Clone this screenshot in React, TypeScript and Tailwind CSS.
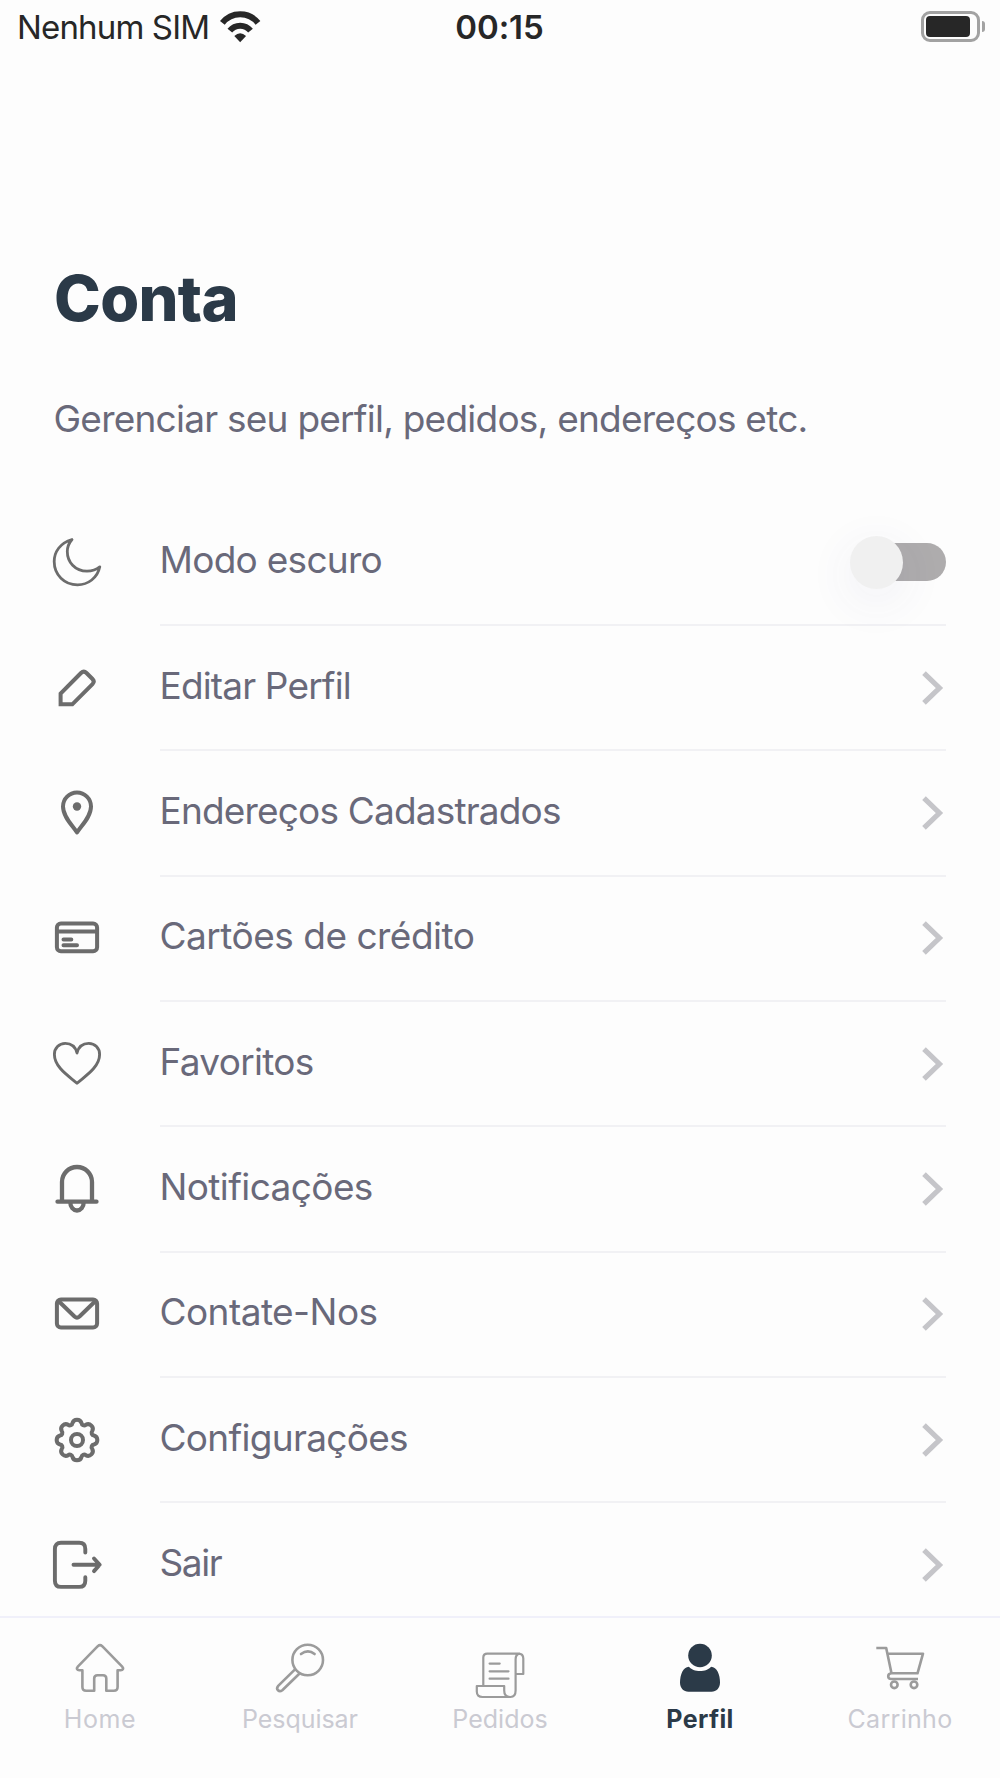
import React from "react";

type IconProps = { children: React.ReactNode; width?: number; className?: string };

function Icon({ children, width = 4, className = "" }: IconProps) {
  return (
    <svg
      viewBox="0 0 48 48"
      className={`size-12 shrink-0 overflow-visible ${className}`}
      fill="none"
      stroke="currentColor"
      strokeWidth={width}
      strokeLinecap="round"
      strokeLinejoin="round"
    >
      {children}
    </svg>
  );
}

// Eight rounded lobes joined by small concave valleys.
function gearPath() {
  const at = (deg: number) => {
    const a = (deg * Math.PI) / 180;
    return `${(24 + 17.5 * Math.cos(a)).toFixed(2)} ${(24 + 17.5 * Math.sin(a)).toFixed(2)}`;
  };
  let d = `M${at(-15)}`;
  for (let i = 0; i < 8; i++) {
    d += `A4.7 4.7 0 0 1 ${at(i * 45 + 15)}A2.6 2.6 0 0 0 ${at(i * 45 + 30)}`;
  }
  return d + "Z";
}

const rows = [
  {
    label: "Modo escuro",
    track: "tracking-[-0.72px]",
    icon: (
      <Icon width={2.8}>
        <path d="M19 1.5C7 5 1.2 14 1.2 23.5C1.2 37 11.5 46.8 24.5 46.8C35 46.8 44.5 40 46.8 28.8C43 32 38 33.2 34 33.2C22 33.2 14.3 24 14.3 13.5C14.3 9 16 5 19 1.5Z" />
      </Icon>
    ),
  },
  {
    label: "Editar Perfil",
    track: "tracking-[-0.84px]",
    icon: (
      <Icon>
        <path strokeLinejoin="miter" d="M7.6 40.3V29.5L28 9Q30.8 6.3 33.5 9L39.5 15Q42 17.5 39.5 20.2L19.3 40.3Z" />
      </Icon>
    ),
  },
  {
    label: "Endereços Cadastrados",
    track: "tracking-[-0.82px]",
    icon: (
      <Icon>
        <path d="M24 43.5C20 37 10 28 10 17.5a14 14 0 0 1 28 0C38 28 28 37 24 43.5Z" />
        <circle cx="24" cy="17.5" r="4.2" fill="currentColor" stroke="none" />
      </Icon>
    ),
  },
  {
    label: "Cartões de crédito",
    track: "tracking-[-0.5px]",
    icon: (
      <Icon>
        <rect x="3.9" y="9.4" width="40.2" height="27.8" rx="4" />
        <path d="M4 17.5H44M10.5 25.5H18.3M10.5 31.3H24" />
      </Icon>
    ),
  },
  {
    label: "Favoritos",
    track: "tracking-[-0.7px]",
    icon: (
      <Icon width={2.9}>
        <path d="M24 43.3C18 37.5 1.4 28 1.4 14.5C1.4 8 6 3.4 12.3 3.4C18.5 3.4 22.5 7 24 13C25.5 7 29.5 3.4 35.7 3.4C42 3.4 46.6 8 46.6 14.5C46.6 28 30 37.5 24 43.3Z" />
      </Icon>
    ),
  },
  {
    label: "Notificações",
    track: "tracking-[-0.6px]",
    icon: (
      <Icon width={4.3}>
        <path d="M9 36V17a15 15 0 0 1 30 0V36M4.5 36.7H43.5M17.3 37.5a6.7 8 0 0 0 13.4 0" />
      </Icon>
    ),
  },
  {
    label: "Contate-Nos",
    track: "tracking-[-0.55px]",
    icon: (
      <Icon>
        <rect x="3.9" y="9.6" width="40.2" height="27.8" rx="4" />
        <path d="M5.5 11L21.5 26.5Q24 28.7 26.5 26.5L42.5 11" />
      </Icon>
    ),
  },
  {
    label: "Configurações",
    track: "tracking-[-0.7px]",
    icon: (
      <Icon>
        <path d={gearPath()} />
        <circle cx="24" cy="24" r="6" />
      </Icon>
    ),
  },
  {
    label: "Sair",
    track: "tracking-[-1.4px]",
    icon: (
      <Icon width={3.9}>
        <path d="M32.3 11.5V8Q32.3 1.8 26.2 1.8H8Q1.9 1.8 1.9 8V39.7Q1.9 45.9 8 45.9H26.2Q32.3 45.9 32.3 39.7V36.2M20.5 23.8H46.5M41 17.5L46.7 23.8L41 30.1" />
      </Icon>
    ),
  },
];

const tabs = [
  {
    label: "Home",
    track: "tracking-[0.6px]",
    icon: (
      <Icon width={2.6}>
        <path d="M21.8 2.2Q24 0.2 26.2 2.2L46.2 22.6C48 24.6 46.8 26.2 44.8 26.2H41.6V43C41.6 45.5 40.3 46.8 37.8 46.8H30.3V34.5Q30.3 31.2 27 31.2H21.5Q18.2 31.2 18.2 34.5V46.8H10.2C7.7 46.8 6.4 45.5 6.4 43V26.2H3.2C1.2 26.2 0 24.6 1.8 22.6Z" />
      </Icon>
    ),
  },
  {
    label: "Pesquisar",
    track: "tracking-[-0.05px]",
    icon: (
      <Icon width={2.6}>
        <circle cx="31.7" cy="16" r="15.3" />
        <path d="M19 25.3L2.2 41.9C-0.6 45.2 3 48.8 6.3 46.2L23.3 29.7M25 10Q32 4.6 38.6 10" />
      </Icon>
    ),
  },
  {
    label: "Pedidos",
    track: "tracking-normal",
    icon: (
      <Icon width={2.2}>
        <path d="M7.3 42V13.6Q7.3 9.6 11.3 9.6H42.5Q47.3 9.6 47.3 14.6V30H39.5M43.5 9.6Q39.6 10.1 39.6 15.6V46.6Q39.6 53 34.5 53H6.5Q0.8 53 0.8 47.6V42H28.2V46.6Q28.2 53 34 53M13.6 19.6H23.7M13.6 27.3H32.5M13.6 34.7H32.5" />
      </Icon>
    ),
  },
  {
    label: "Perfil",
    track: "tracking-[0.35px]",
    active: true,
    icon: (
      <Icon>
        <g fill="currentColor" stroke="none">
          <circle cx="24" cy="11.5" r="11.8" />
          <path d="M13 22.8C17 28.5 31 28.5 35 22.8C41 23 44 31 44 38.5C44 44 40.5 47.8 35.5 47.8H12.5C7.5 47.8 4 44 4 38.5C4 31 7 23 13 22.8Z" />
        </g>
      </Icon>
    ),
  },
  {
    label: "Carrinho",
    track: "tracking-[0.3px]",
    icon: (
      <Icon width={2.6}>
        <path strokeLinecap="butt" d="M0.3 4H10.2L15.5 29.3H41.5L47 9.7H11.4M15.5 29.3Q12.2 29.6 12.2 32.2Q12.2 35 15.5 35H42" />
        <circle cx="18.3" cy="40.8" r="3.3" />
        <circle cx="38" cy="40.8" r="3.3" />
      </Icon>
    ),
  },
];

function StatusBar() {
  return (
    <header className="grid h-[54px] grid-cols-3 items-center pr-[15px] pl-[17px] text-[33px] leading-none text-[#272727]">
      <div className="flex items-center gap-[11px]">
        <span className="pt-px tracking-[-0.85px] whitespace-nowrap">Nenhum SIM</span>
        <svg viewBox="0 0 38 30" className="h-[32px] w-[41px] shrink-0" fill="none" stroke="currentColor" strokeWidth="5.6">
          <path d="M2 11.2A21.1 21.1 0 0 1 35.4 11.2M9 18.4A12.4 12.4 0 0 1 28.4 18.4" />
          <path d="M13.2 23.4Q18.7 18.4 24.2 23.4L18.7 29.2Z" fill="currentColor" stroke="none" />
        </svg>
      </div>
      <span className="pt-px pr-[3px] text-center font-semibold tracking-[-0.1px]">00:15</span>
      <div className="flex items-center justify-end gap-[2px] pb-0.5">
        <div className="h-[31px] w-[59px] rounded-[9px] border-[3px] border-[#a2a2a2] p-[2px]">
          <div className="h-full w-[44px] rounded-[4px] bg-[#272727]" />
        </div>
        <div className="h-[11px] w-[3px] rounded-r-full bg-[#a3a3a3]" />
      </div>
    </header>
  );
}

function Toggle() {
  return (
    <div className="flex h-[38px] w-[96px] items-center rounded-full bg-[linear-gradient(to_right,transparent_24px,#aeacad_24px)]">
      <div className="size-[53px] shrink-0 rounded-full bg-[#f0f0f0] shadow-[0_12px_40px_10px_rgba(80,80,150,0.045)]" />
    </div>
  );
}

export default function App() {
  return (
    <div className="flex h-[1778px] w-[1000px] flex-col overflow-hidden bg-[#fdfdfd] font-[Inter,sans-serif]">
      <StatusBar />
      <main className="flex-1 overflow-hidden pr-[54px] pl-[53px]">
        <h1 className="mt-[208px] ml-px text-[63px] leading-[72px] font-extrabold tracking-[-0.7px] text-[#2b3a48]">Conta</h1>
        <p className="mt-[61px] ml-[0.5px] text-[37px] leading-[48px] tracking-[-0.76px] whitespace-nowrap text-[#69697a]">
          Gerenciar seu perfil, pedidos, endereços etc.
        </p>
        <ul className="mt-[57.7px]">
          {rows.map((row, i) => (
            <li key={row.label} className="flex h-[125.33px] items-center text-[#6c6c6c]">
              <div className="pb-[2px]">{row.icon}</div>
              <div
                className={`ml-[58.5px] flex h-full flex-1 items-center justify-between ${
                  i < rows.length - 1 ? "border-b-2 border-[#f1f1f4]" : "pb-[2px]"
                }`}
              >
                <span className={`pb-[5px] text-[37px] leading-none whitespace-nowrap text-[#69697a] ${row.track}`}>
                  {row.label}
                </span>
                {i === 0 ? (
                  <Toggle />
                ) : (
                  <svg viewBox="0 0 24 34" className="h-[34px] w-6" fill="none" stroke="#c5c5c9" strokeWidth="5.2">
                    <path d="M2 2.2L17.4 17L2 31.8" />
                  </svg>
                )}
              </div>
            </li>
          ))}
        </ul>
      </main>
      <nav className="grid h-[162px] shrink-0 grid-cols-5 border-t-2 border-[#f0f0fa] bg-[#fdfdfd]">
        {tabs.map((tab) => (
          <div
            key={tab.label}
            className={`flex flex-col items-center pt-[25.5px] ${tab.active ? "text-[#2b3a48]" : "text-[#9b9b9b]"}`}
          >
            {tab.icon}
            <span
              className={`mt-[12px] text-[25px] leading-[30px] ${tab.track} ${
                tab.active ? "font-bold text-[#2b3a48]" : "text-[#cacad2]"
              }`}
            >
              {tab.label}
            </span>
          </div>
        ))}
      </nav>
    </div>
  );
}
